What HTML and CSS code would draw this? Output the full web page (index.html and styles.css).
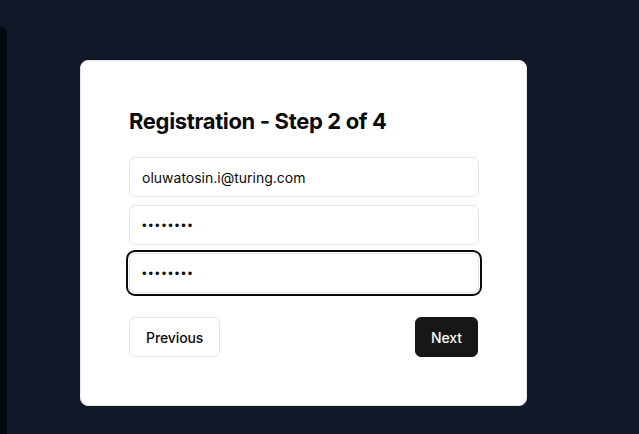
FILE: index.html
```html
<!DOCTYPE html>
<html lang="en">
<head>
<meta charset="utf-8">
<title>Registration</title>
<link rel="stylesheet" href="styles.css">
</head>
<body>
<div class="page">
  <div class="side-strip"></div>
  <main class="stage">
    <section class="card">
      <h1 class="title">Registration - Step 2 of 4</h1>
      <form class="form">
        <input class="field" type="email" value="oluwatosin.i@turing.com">
        <input class="field field-secret" type="password" value="12345678">
        <input class="field field-secret field-focused" type="password" value="12345678">
        <div class="actions">
          <button type="button" class="btn btn-outline">Previous</button>
          <button type="button" class="btn btn-solid">Next</button>
        </div>
      </form>
    </section>
  </main>
</div>
</body>
</html>
```
FILE: styles.css
```css
* { box-sizing: border-box; }
html, body {
  margin: 0;
  padding: 0;
  height: 100%;
  background: #111827;
  font-family: Inter, "Noto Sans", sans-serif;
}
.page {
  display: flex;
  height: 434px;
  overflow: hidden;
}
.side-strip {
  width: 7px;
  margin-top: 27px;
  background: #030712;
  border-top-right-radius: 6px;
  flex: none;
}
.stage {
  padding-left: 73px;
  padding-top: 60px;
}
.card {
  width: 447px;
  background: #fff;
  border: 1px solid #e5e7eb;
  border-radius: 8px;
  padding: 44px 48px 48px 48px;
}
.title {
  margin: 0 0 20px 0;
  font-size: 22px;
  line-height: 32px;
  font-weight: 700;
  color: #0a0a0a;
  letter-spacing: -0.35px;
}
.form {
  display: flex;
  flex-direction: column;
  gap: 8px;
}
.field {
  width: 350px;
  height: 40px;
  border: 1px solid #e5e5e5;
  border-radius: 6px;
  padding: 0 12px;
  font-family: Inter, "Noto Sans", sans-serif;
  font-size: 14px;
  color: #0a0a0a;
  background: #fff;
  outline: none;
}
.field-secret {
  font-family: "Liberation Sans", sans-serif;
  font-size: 13px;
  letter-spacing: 2px;
}
.field-focused {
  box-shadow: 0 0 0 1px #fff, 0 0 0 3px #0a0a0a;
}
.actions {
  display: flex;
  justify-content: space-between;
  margin-top: 16px;
}
.btn {
  height: 40px;
  padding: 0 16px;
  border-radius: 6px;
  font-family: Inter, "Noto Sans", sans-serif;
  font-size: 14px;
  font-weight: 500;
  letter-spacing: -0.1px;
  cursor: pointer;
}
.btn-outline {
  background: #fff;
  border: 1px solid #e5e5e5;
  color: #0a0a0a;
}
.btn-solid {
  background: #171717;
  border: 1px solid #171717;
  color: #fafafa;
  padding: 0 15px;
}
```
